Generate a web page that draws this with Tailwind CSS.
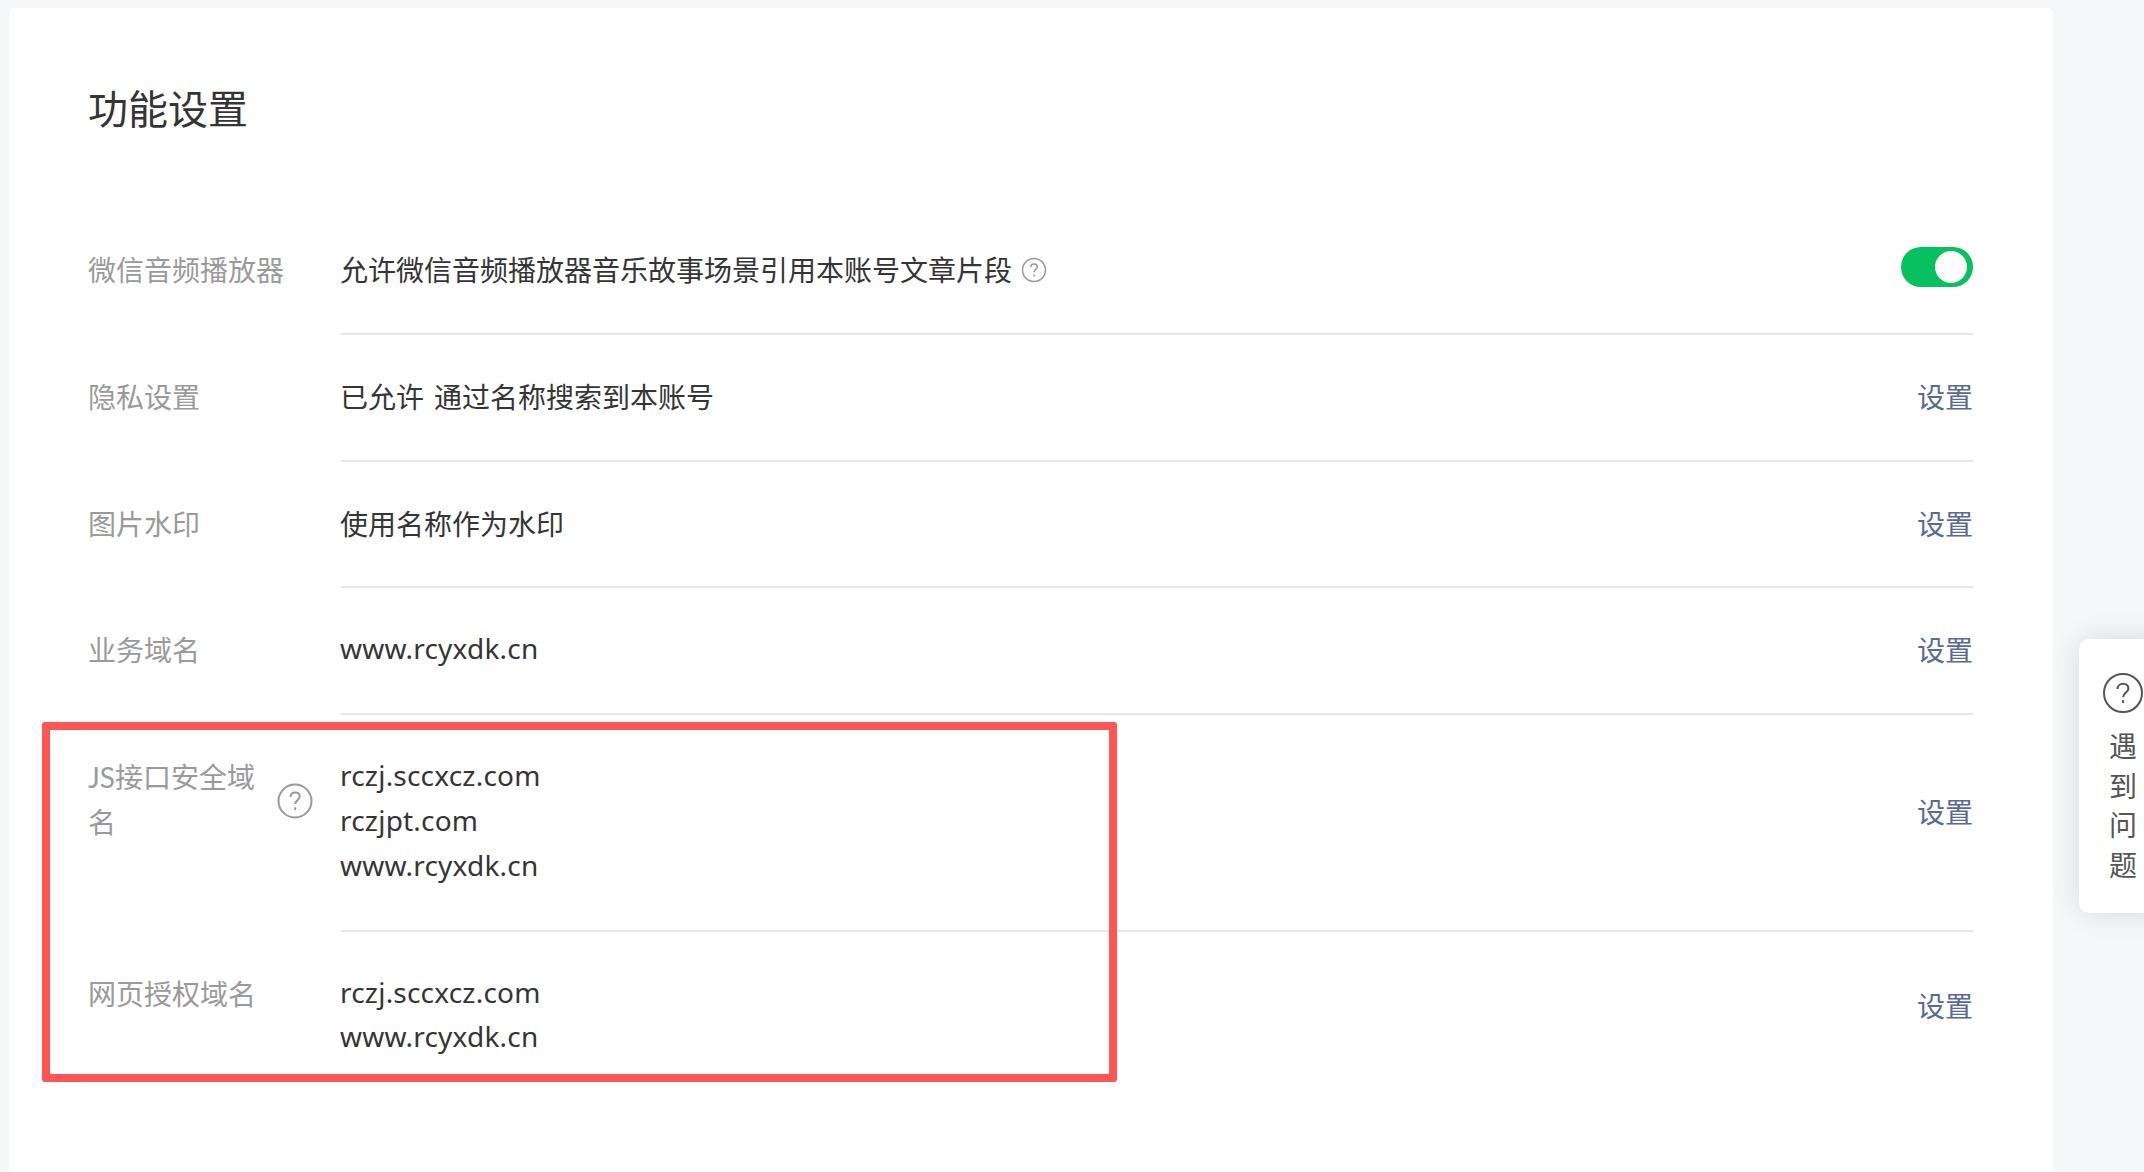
<!DOCTYPE html>
<html lang="en">

<head>
    <meta charset="UTF-8">
    <meta name="viewport" content="width=device-width, initial-scale=1.0">
    <title>功能设置</title>
    <script src="https://cdn.jsdelivr.net/npm/@tailwindcss/browser@4"></script>
</head>

<body class="bg-[#f6f7f9] h-[1172px] overflow-hidden relative font-['Noto_Sans','Noto_Sans_CJK_SC',sans-serif] text-[28px] leading-[44.8px] text-[#353535]">
    <!-- Settings card -->
    <div class="bg-white rounded-[6px] ml-[9px] mt-[8px] w-[2044px] h-[1200px] pl-[79px] pr-[80px] pt-[73px]">
        <h2 class="text-[40px] leading-[56px] font-normal">功能设置</h2>

        <div class="mt-[71px]">
            <div class="flex">
                <div class="w-[253px] shrink-0 py-[40px] text-[#9a9a9a]">微信音频播放器</div>
                <div class="flex-1 flex items-center justify-between py-[40px] border-b-2 border-[#e4e8eb]">
                    <div class="flex items-center -ml-[1px]">
                        <span>允许微信音频播放器音乐故事场景引用本账号文章片段</span>
                        <svg class="ml-[9px]" width="26" height="26" viewBox="0 0 26 26" fill="none" stroke="#9a9a9a" stroke-width="1.5">
                            <circle cx="13" cy="13" r="11.5"></circle>
                            <path d="M9.8 10.2c0-1.9 1.4-3.2 3.3-3.2s3.2 1.2 3.2 2.9c0 2.4-3.2 2.6-3.2 5.4"></path>
                            <path d="M13.1 17.6v2"></path>
                        </svg>
                    </div>
                    <div class="w-[72px] h-[40px] rounded-full bg-[#07c160] flex items-center justify-end pr-[6px] -mt-[6px]">
                        <div class="w-[32px] h-[32px] rounded-full bg-white"></div>
                    </div>
                </div>
            </div>

            <div class="flex">
                <div class="w-[253px] shrink-0 py-[40px] text-[#9a9a9a]">隐私设置</div>
                <div class="flex-1 flex items-center justify-between py-[40px] border-b-2 border-[#e4e8eb]">
                    <div class="-ml-[1px] flex gap-[10px]"><span>已允许</span><span>通过名称搜索到本账号</span></div>
                    <a class="text-[#576b95]">设置</a>
                </div>
            </div>

            <div class="flex">
                <div class="w-[253px] shrink-0 py-[40px] text-[#9a9a9a]">图片水印</div>
                <div class="flex-1 flex items-center justify-between py-[40px] border-b-2 border-[#e4e8eb]">
                    <div class="-ml-[1px]">使用名称作为水印</div>
                    <a class="text-[#576b95]">设置</a>
                </div>
            </div>

            <div class="flex">
                <div class="w-[253px] shrink-0 py-[40px] text-[#9a9a9a]">业务域名</div>
                <div class="flex-1 flex items-center justify-between py-[40px] border-b-2 border-[#e4e8eb]">
                    <div class="tracking-[0.2px] -ml-[1px] -translate-y-[2px]">www.rcyxdk.cn</div>
                    <a class="text-[#576b95]">设置</a>
                </div>
            </div>

            <div class="flex">
                <div class="w-[253px] shrink-0 py-[40px] text-[#9a9a9a] flex items-start">
                    <span class="w-[186px] font-['Lato','Noto_Sans_CJK_SC',sans-serif]">JS接口安全域名</span>
                    <svg class="ml-[3px] mt-[28px]" width="36" height="36" viewBox="0 0 36 36" fill="none" stroke="#9a9a9a" stroke-width="2">
                        <circle cx="18" cy="18" r="16.5"></circle>
                        <path d="M13.5 14c0-2.8 2-4.6 4.7-4.6s4.5 1.7 4.5 4.1c0 3.4-4.5 3.6-4.5 7.6"></path>
                        <path d="M18.2 24.2v2.8"></path>
                    </svg>
                </div>
                <div class="flex-1 flex justify-between py-[40px] border-b-2 border-[#e4e8eb]">
                    <div class="tracking-[0.2px] -ml-[1px] -translate-y-[2px]">
                        <div>rczj.sccxcz.com</div>
                        <div>rczjpt.com</div>
                        <div>www.rcyxdk.cn</div>
                    </div>
                    <a class="text-[#576b95] self-center mb-[20px]">设置</a>
                </div>
            </div>

            <div class="flex">
                <div class="w-[253px] shrink-0 py-[40px] text-[#9a9a9a]">网页授权域名</div>
                <div class="flex-1 flex justify-between py-[40px]">
                    <div class="tracking-[0.2px] -ml-[1px] -translate-y-[2px]">
                        <div>rczj.sccxcz.com</div>
                        <div>www.rcyxdk.cn</div>
                    </div>
                    <a class="text-[#576b95] self-center mb-[20px]">设置</a>
                </div>
            </div>
        </div>
    </div>

    <!-- Red annotation box -->
    <div class="absolute left-[42px] top-[722px] w-[1075px] h-[360px] border-[8px] border-[#ff5555] rounded-[3px]"></div>

    <!-- Floating help tab -->
    <div class="absolute left-[2079px] top-[639px] w-[90px] h-[274px] bg-white rounded-[10px] shadow-[0_0_30px_rgba(0,0,0,0.12)] pl-[24px] pt-[34px] text-[#555555] leading-[39.5px]">
        <svg width="40" height="40" viewBox="0 0 40 40" fill="none" stroke="#555555" stroke-width="2">
            <circle cx="20" cy="20" r="19"></circle>
            <path d="M14.5 16c0-3.2 2.4-5.3 5.6-5.3s5.3 2 5.3 4.8c0 4-5.3 4.2-5.3 8.8"></path>
            <path d="M20.1 27v3"></path>
        </svg>
        <div class="w-[40px] pl-[6px] mt-[14px]">遇到问题</div>
    </div>
</body>

</html>
